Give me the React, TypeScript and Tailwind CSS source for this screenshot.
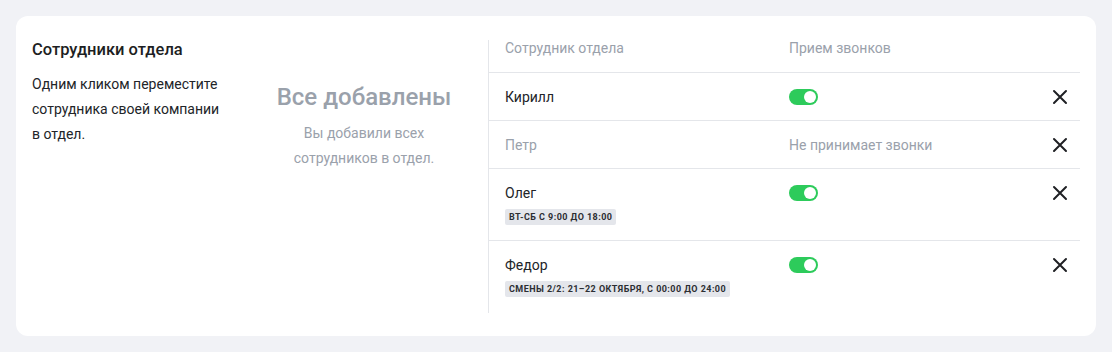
import React from 'react';

interface Employee {
  name: string;
  active: boolean;
  schedule?: string;
}

const employees: Employee[] = [
  { name: 'Кирилл', active: true },
  { name: 'Петр', active: false },
  { name: 'Олег', active: true, schedule: 'Вт-сб с 9:00 до 18:00' },
  { name: 'Федор', active: true, schedule: 'Смены 2/2: 21–22 октября, с 00:00 до 24:00' },
];

function Toggle() {
  return (
    <div className="w-[29px] h-4 rounded-full bg-[#2dcb5b] flex items-center justify-end pr-[2px]">
      <div className="w-3 h-3 rounded-full bg-white" />
    </div>
  );
}

function CloseIcon() {
  return (
    <svg width="16" height="16" viewBox="0 0 16 16" fill="none" className="shrink-0">
      <path d="M2 2L14 14M14 2L2 14" stroke="#1f2024" strokeWidth="2" strokeLinecap="round" />
    </svg>
  );
}

export default function App() {
  return (
    <div className="w-[1112px] h-[352px] bg-[#f1f2f6] p-4" style={{ fontFamily: 'Roboto, "Noto Sans", sans-serif' }}>
      <div className="bg-white rounded-xl h-full px-4 pt-6 pb-6 flex">
        {/* left description */}
        <div className="w-[208px]">
          <h2 className="text-[16.5px] leading-5 font-medium text-[#1d1e22]">Сотрудники отдела</h2>
          <p className="mt-3 w-[196px] text-[14px] leading-[25px] text-[#222428]">
            Одним кликом переместите сотрудника своей компании в отдел.
          </p>
        </div>

        {/* empty state */}
        <div className="flex-1 flex flex-col items-center text-center pt-[41px]">
          <div className="text-[24px] leading-8 font-medium text-[#9aa1ab]">Все добавлены</div>
          <p className="mt-2 w-[160px] text-[14px] leading-[25px] text-[#9aa1ab]">
            Вы добавили всех сотрудников в отдел.
          </p>
        </div>

        {/* table */}
        <div className="w-[592px] self-start border-l border-[#e4e6ea] flex flex-col">
          <div className="flex shrink-0 h-[33px] border-b border-[#e4e6ea] pl-4 text-[14px] leading-4 text-[#9aa1ab]">
            <div className="w-[284px]">Сотрудник отдела</div>
            <div>Прием звонков</div>
          </div>
          {employees.map((e, i) => (
            <div
              key={e.name}
              className={`flex items-start pl-4 pr-3 pt-4 ${i < employees.length - 1 ? 'pb-[15px] border-b border-[#e4e6ea]' : 'pb-4'}`}
            >
              <div className="w-[284px] flex flex-col items-start">
                <div className={`text-[14px] leading-4 ${e.active ? 'text-[#222428]' : 'text-[#9aa1ab]'}`}>{e.name}</div>
                {e.schedule && (
                  <div className="mt-2 flex h-4 items-center rounded-[2px] bg-[#e4e6eb] px-1 text-[9px] leading-none font-bold uppercase tracking-[0.05em] text-[#2c2e33]">
                    {e.schedule}
                  </div>
                )}
              </div>
              <div className="flex-1 h-4 flex items-center">
                {e.active ? <Toggle /> : <span className="text-[14px] leading-4 text-[#9aa1ab]">Не принимает звонки</span>}
              </div>
              <CloseIcon />
            </div>
          ))}
        </div>
      </div>
    </div>
  );
}
